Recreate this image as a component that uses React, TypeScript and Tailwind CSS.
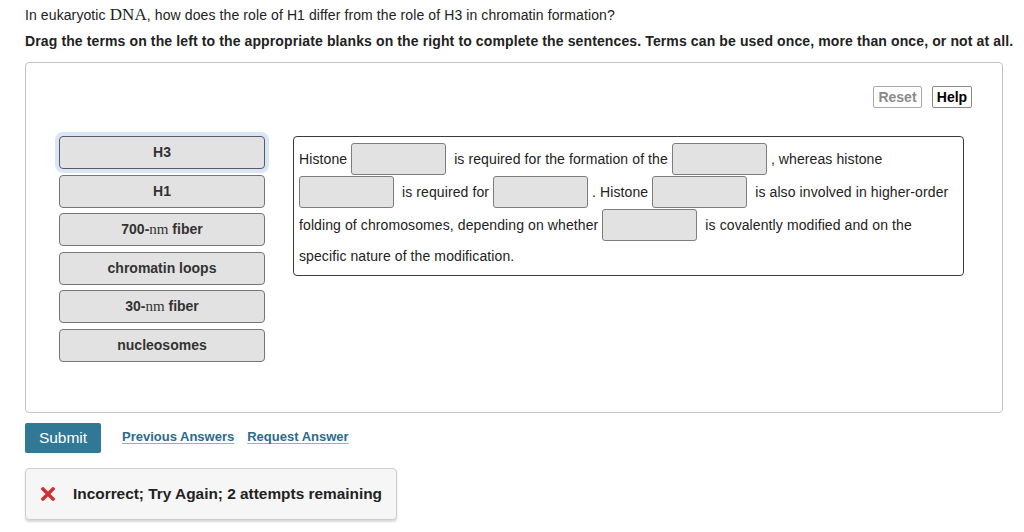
import React from "react";

const terms = ["H3", "H1", "700-nm fiber", "chromatin loops", "30-nm fiber", "nucleosomes"];

function TermLabel({ text }: { text: string }) {
  // "nm" is typeset in the math (serif) face
  const m = text.match(/^(\d+-)nm( fiber)$/);
  if (m) {
    return (
      <span>
        {m[1]}
        <span className="font-normal text-[15px]" style={{ fontFamily: '"Liberation Serif", "DejaVu Serif", serif' }}>
          nm
        </span>
        {m[2]}
      </span>
    );
  }
  return <span>{text}</span>;
}

function Term({ text, focused }: { text: string; focused?: boolean }) {
  return (
    <div
      className={
        "h-[33px] w-[206px] rounded-[4px] border bg-[#e2e2e2] flex items-center justify-center text-[14px] font-bold text-[#333] " +
        (focused ? "border-[#5a5a66] shadow-[0_0_0_4px_#dae6f8]" : "border-[#767676]")
      }
    >
      <TermLabel text={text} />
    </div>
  );
}

function Blank() {
  return <div className="h-[32px] w-[95px] shrink-0 rounded-[3px] border border-[#7d7d7d] bg-[#e2e2e2] mr-[4px]" />;
}

function T({ children }: { children: React.ReactNode }) {
  return <span className="whitespace-pre leading-[32px]">{children}</span>;
}

export default function App() {
  return (
    <div
      className="w-[1024px] h-[532px] bg-white text-[#222] overflow-hidden"
      style={{ fontFamily: '"Liberation Sans", Arial, Helvetica, sans-serif' }}
    >
      <div className="pl-[25px] pt-[5px]">
        <p className="text-[14px] leading-[20px] tracking-[0.1px]">
          In eukaryotic{" "}
          <span className="text-[17px]" style={{ fontFamily: '"Liberation Serif", "DejaVu Serif", serif' }}>
            DNA
          </span>
          , how does the role of H1 differ from the role of H3 in chromatin formation?
        </p>
        <p className="mt-[6px] text-[14px] leading-[20px] font-bold tracking-[0.12px]">
          Drag the terms on the left to the appropriate blanks on the right to complete the sentences. Terms can be used once, more than once, or not at all.
        </p>

        {/* activity panel */}
        <div className="mt-[11px] w-[978px] h-[351px] rounded-[4px] border border-[#c4c4c4] pt-[23px] pl-[33px] pr-[30px]">
          <div className="flex justify-end gap-[10px]">
            <button className="h-[22px] w-[49px] rounded-[2px] border border-[#a9a9a9] text-[14px] font-bold text-[#8a8a8a] leading-none">
              Reset
            </button>
            <button className="h-[22px] w-[40px] rounded-[2px] border border-[#8a8a8a] text-[14px] font-bold text-black leading-none">
              Help
            </button>
          </div>

          <div className="mt-[28px] flex gap-[28px]">
            <div className="flex flex-col gap-[5.5px]">
              {terms.map((t, i) => (
                <Term key={t} text={t} focused={i === 0} />
              ))}
            </div>

            <div className="w-[671px] h-[140px] rounded-[4px] border border-[#3a3a3a] pl-[5px] pt-[6px] text-[14px] text-[#222] tracking-[0.1px]">
              <div className="flex items-start h-[33px]">
                <T>Histone </T>
                <Blank />
                <T> is required for the formation of the </T>
                <Blank />
                <T>, whereas histone</T>
              </div>
              <div className="flex items-start h-[33px]">
                <Blank />
                <T> is required for </T>
                <Blank />
                <T>. Histone </T>
                <Blank />
                <T> is also involved in higher-order</T>
              </div>
              <div className="flex items-start h-[33px]">
                <T>folding of chromosomes, depending on whether </T>
                <Blank />
                <T> is covalently modified and on the</T>
              </div>
              <div className="leading-[28px]">specific nature of the modification.</div>
            </div>
          </div>
        </div>

        <div className="mt-[10px] flex items-center">
          <button className="h-[30px] w-[76px] rounded-[2px] bg-[#317896] text-white text-[15.5px] leading-none">
            Submit
          </button>
          <div className="ml-[21px] flex gap-[13px] text-[13px] font-bold text-[#2b6b8c] -mt-[2px]">
            <span className="underline decoration-[#8fb3c6] underline-offset-[2px]">Previous Answers</span>
            <span className="underline decoration-[#8fb3c6] underline-offset-[2px]">Request Answer</span>
          </div>
        </div>

        <div className="mt-[15px] w-[372px] h-[52px] rounded-[4px] border border-[#cfcfcf] bg-[#f6f6f6] shadow-[0_2px_2px_rgba(0,0,0,0.15)] flex items-center pl-[15px]">
          <svg width="14" height="14" viewBox="0 0 14 14" className="shrink-0">
            <path d="M2 2 L12 12 M12 2 L2 12" stroke="#d32f2f" strokeWidth="3.4" strokeLinecap="square" />
          </svg>
          <span className="ml-[18px] text-[15.4px] font-bold text-[#222]">Incorrect; Try Again; 2 attempts remaining</span>
        </div>
      </div>
    </div>
  );
}
